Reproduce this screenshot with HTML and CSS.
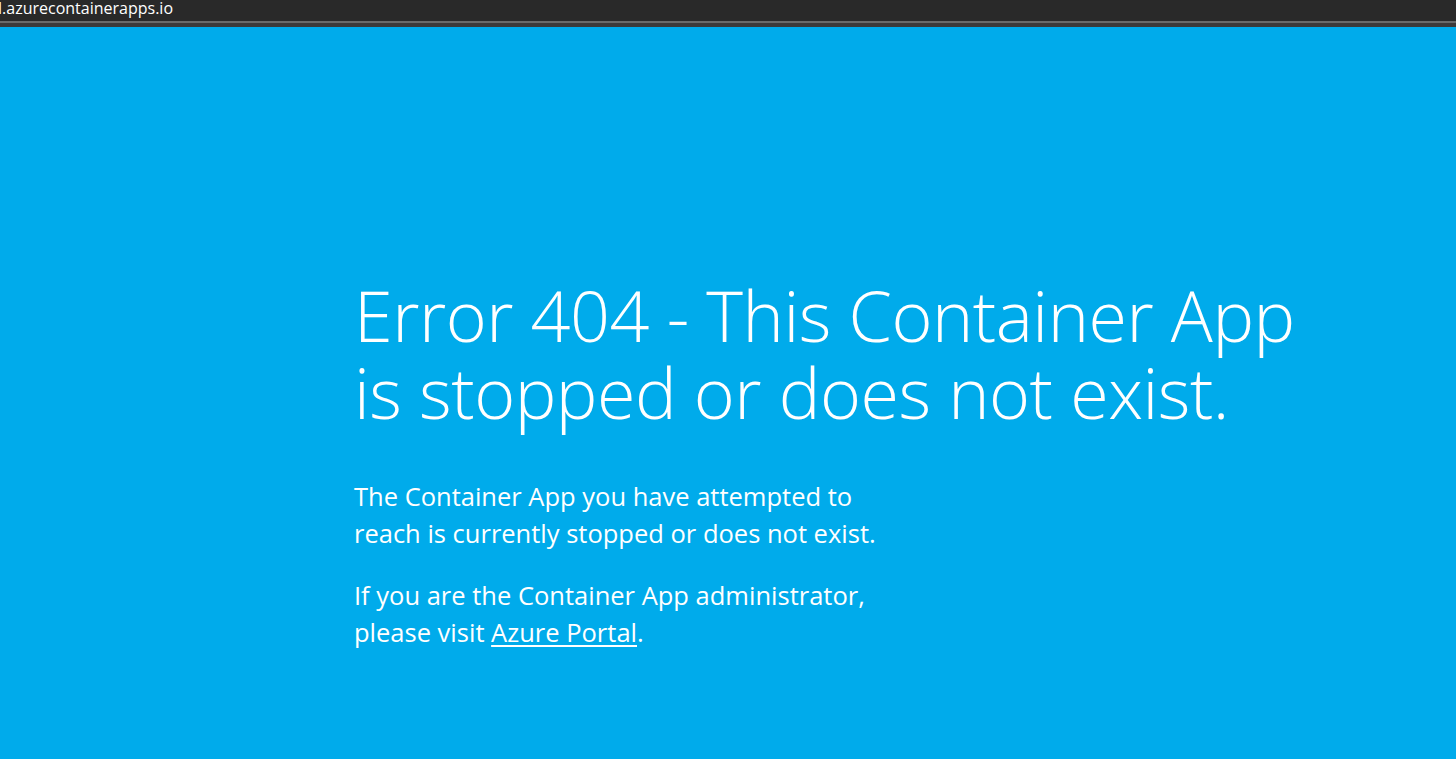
FILE: index.html
```html
<!DOCTYPE html>
<html>
<head>
<meta charset="utf-8">
<link rel="stylesheet" href="styles.css">
</head>
<body>
<div class="topbar">
  <div class="url">l.azurecontainerapps.io</div>
  <div class="line1"></div>
  <div class="line2"></div>
</div>
<main class="page">
  <div class="content">
    <h1 class="title">Error 404 - This Container App<br>is stopped or does not exist.</h1>
    <p class="text">The Container App you have attempted to<br>reach is currently stopped or does not exist.</p>
    <p class="text">If you are the Container App administrator,<br>please visit <a class="link" href="#">Azure Portal</a>.</p>
  </div>
</main>
</body>
</html>
```
FILE: styles.css
```css
html, body {
  margin: 0;
  padding: 0;
  height: 100%;
}
body {
  background: #00abeb;
  font-family: "Open Sans", "Liberation Sans", sans-serif;
  color: #fff;
  overflow: hidden;
}
.topbar {
  background: #292929;
}
.url {
  height: 21px;
  font-size: 16px;
  line-height: 16px;
  color: #fff;
  margin-left: -2px;
  overflow: hidden;
}
.line1 {
  height: 2px;
  background: #6a6a6a;
}
.line2 {
  height: 4px;
  background: #3c3a3a;
}
.page {
  padding-top: 250px;
  padding-left: 354px;
}
.title {
  margin: 0;
  font-weight: 300;
  font-size: 70px;
  line-height: 77px;
  letter-spacing: -0.5px;
}
.text {
  margin: 47px 0 0;
  font-size: 25.5px;
  line-height: 37px;
}
.text + .text {
  margin-top: 25px;
}
.link {
  color: #fff;
  text-decoration: underline;
  text-underline-offset: 3px;
  text-decoration-thickness: 2px;
}
```
